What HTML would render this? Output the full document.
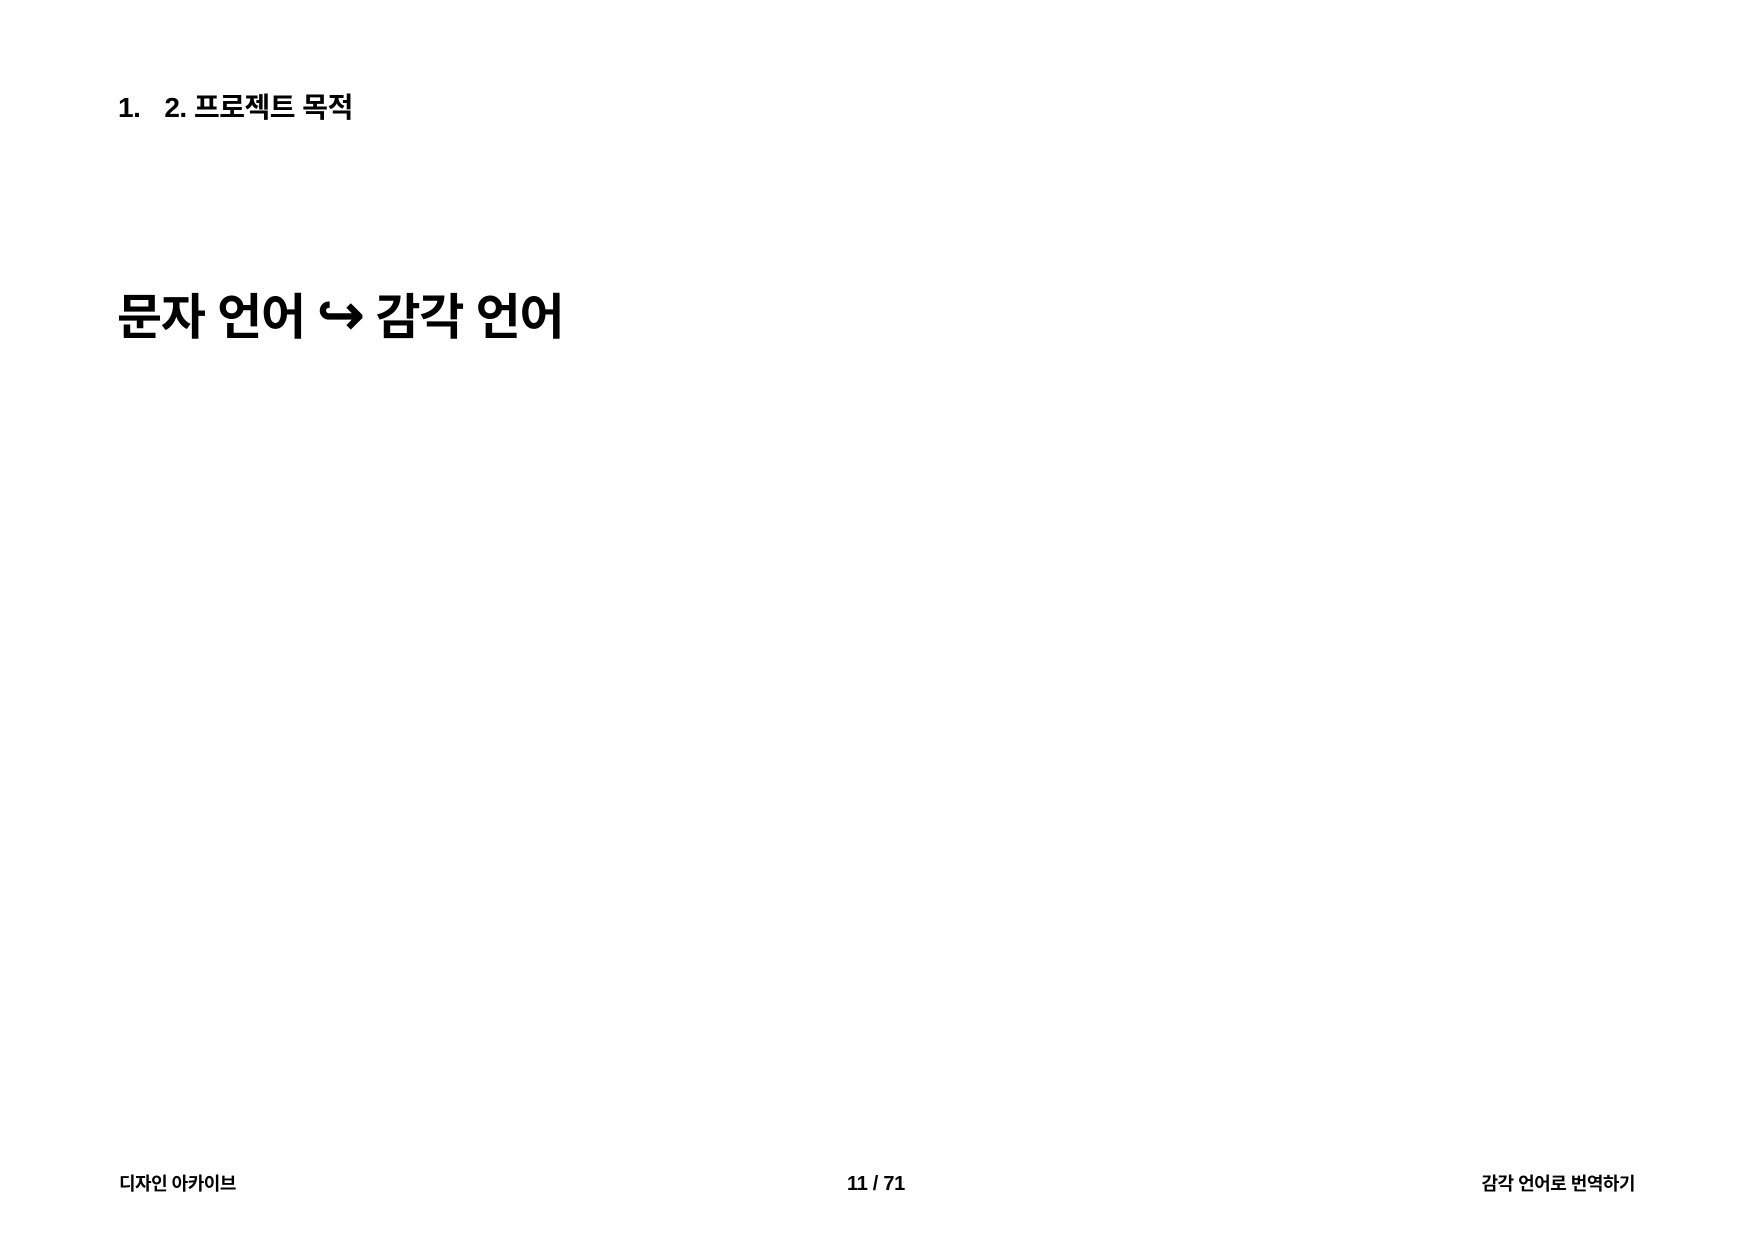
<!DOCTYPE html>
<html><head><meta charset="utf-8"><style>
html,body{margin:0;padding:0;background:#fff;}
body{width:1754px;height:1240px;position:relative;overflow:hidden;font-family:"Liberation Sans","Noto Sans CJK KR",sans-serif;color:#000;font-weight:bold;}
.a{position:absolute;white-space:nowrap;line-height:1;}
</style></head><body>
<div class="a" style="left:118px;top:94px;font-size:28px;letter-spacing:-0.5px;">1.<span style="display:inline-block;width:24px"></span>2. 프로젝트 목적</div>
<div class="a" style="left:117px;top:287px;font-size:49px;letter-spacing:-1.2px;">문자 언어 <span style="font-size:56px">↪</span> 감각 언어</div>
<div class="a" style="left:119px;top:1175px;font-size:18px;letter-spacing:-0.5px;">디자인 아카이브</div>
<div class="a" style="left:847px;top:1174px;font-size:20px;letter-spacing:-0.3px;">11 / 71</div>
<div class="a" style="right:119px;top:1175px;font-size:18px;letter-spacing:-0.5px;">감각 언어로 번역하기</div>
</body></html>
